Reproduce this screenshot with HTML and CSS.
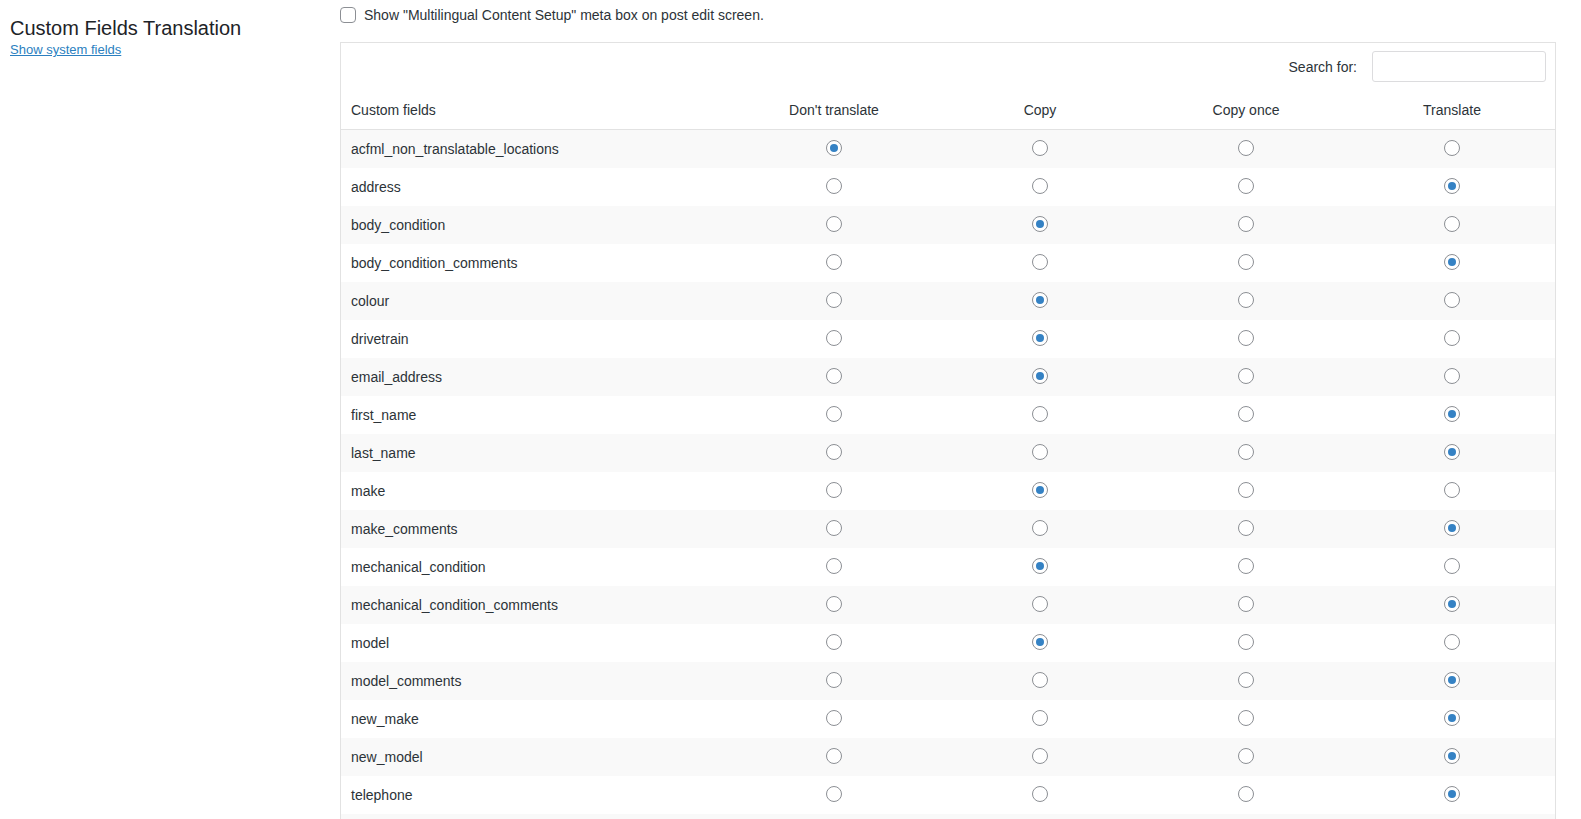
FILE: index.html
```html
<!DOCTYPE html>
<html lang="en">
  <head>
    <meta charset="UTF-8" />
    <title>Custom Fields Translation</title>
    <link rel="stylesheet" href="styles.css">
  </head>
  <body>
    <div class="wrap">
      <div class="side">
        <h2 class="side-title">Custom Fields Translation</h2>
        <a href="#" class="side-link">Show system fields</a>
      </div>

      <div class="main">
        <label class="meta-box">
          <input type="checkbox" class="check" />
          Show "Multilingual Content Setup" meta box on post edit screen.
        </label>

        <div class="fields-box">
          <div class="search-row">
            <label for="search">Search for:</label>
            <input type="text" id="search" class="search-input" />
          </div>

          <table class="fields-table">
            <thead>
              <tr>
                <th class="col-name">Custom fields</th>
                <th>Don't translate</th>
                <th>Copy</th>
                <th>Copy once</th>
                <th>Translate</th>
              </tr>
            </thead>
            <tbody id="fieldRows"></tbody>
          </table>
        </div>
      </div>
    </div>

    <script>
      // 0 = don't translate, 1 = copy, 2 = copy once, 3 = translate
      const fields = [
        ["acfml_non_translatable_locations", 0],
        ["address", 3],
        ["body_condition", 1],
        ["body_condition_comments", 3],
        ["colour", 1],
        ["drivetrain", 1],
        ["email_address", 1],
        ["first_name", 3],
        ["last_name", 3],
        ["make", 1],
        ["make_comments", 3],
        ["mechanical_condition", 1],
        ["mechanical_condition_comments", 3],
        ["model", 1],
        ["model_comments", 3],
        ["new_make", 3],
        ["new_model", 3],
        ["telephone", 3],
        ["transmission", 1],
      ];

      document.getElementById("fieldRows").innerHTML = fields
        .map(([name, mode]) => {
          const cells = [0, 1, 2, 3]
            .map(
              (i) =>
                `<td class="col-radio"><input type="radio" class="radio" name="cf_${name}" ${
                  i === mode ? "checked" : ""
                } /></td>`
            )
            .join("");
          return `<tr><td class="col-name">${name}</td>${cells}</tr>`;
        })
        .join("");
    </script>
  </body>
</html>
```

FILE: styles.css
```css
html,
body {
  height: 100%;
  overflow: hidden;
}
body {
  margin: 0;
  font-family: "Liberation Sans", Arial, sans-serif;
  font-size: 14px;
  color: #2c3338;
  background-color: #fff;
}
.wrap {
  display: flex;
  align-items: flex-start;
}
.side {
  width: 330px;
  padding-left: 10px;
  flex-shrink: 0;
}
.side-title {
  margin: 15px 0 0;
  font-size: 20px;
  font-weight: 400;
  line-height: 26px;
  color: #1d2327;
}
.side-link {
  display: inline-block;
  font-size: 13px;
  line-height: 14px;
  color: #2b7fc0;
}
.main {
  width: 1216px;
  padding-top: 7px;
}
.meta-box {
  display: flex;
  align-items: center;
  gap: 8px;
  line-height: 16px;
}
.check {
  appearance: none;
  width: 16px;
  height: 16px;
  margin: 0;
  border: 1px solid #8c8f94;
  border-radius: 4px;
  background: #fff;
}
.fields-box {
  margin-top: 19px;
  border: 1px solid #e2e2e2;
  background: #fff;
}
.search-row {
  display: flex;
  justify-content: flex-end;
  align-items: center;
  gap: 15px;
  padding: 8px 9px 0 0;
}
.search-input {
  width: 174px;
  height: 31px;
  box-sizing: border-box;
  margin: 0;
  border: 1px solid #dcdcde;
  border-radius: 3px;
}
.fields-table {
  width: 100%;
  border-collapse: collapse;
  margin-top: 9px;
}
.fields-table th {
  font-weight: 400;
  line-height: 20px;
  padding: 9px 0;
  border-bottom: 1px solid #e2e2e2;
  text-align: center;
  width: 206px;
}
.fields-table td {
  line-height: 20px;
  padding: 9px 0;
}
.fields-table .col-name {
  text-align: left;
  padding-left: 10px;
  width: auto;
}
.fields-table tbody tr:nth-child(odd) {
  background-color: #f9f9f9;
}
.col-radio {
  text-align: center;
}
.radio {
  appearance: none;
  width: 16px;
  height: 16px;
  margin: 1px 0 0;
  vertical-align: top;
  border: 1px solid #8c8f94;
  border-radius: 50%;
  background: #fff;
  display: inline-flex;
  align-items: center;
  justify-content: center;
}
.radio:checked::before {
  content: "";
  width: 8px;
  height: 8px;
  border-radius: 50%;
  background-color: #3582c4;
}
```
